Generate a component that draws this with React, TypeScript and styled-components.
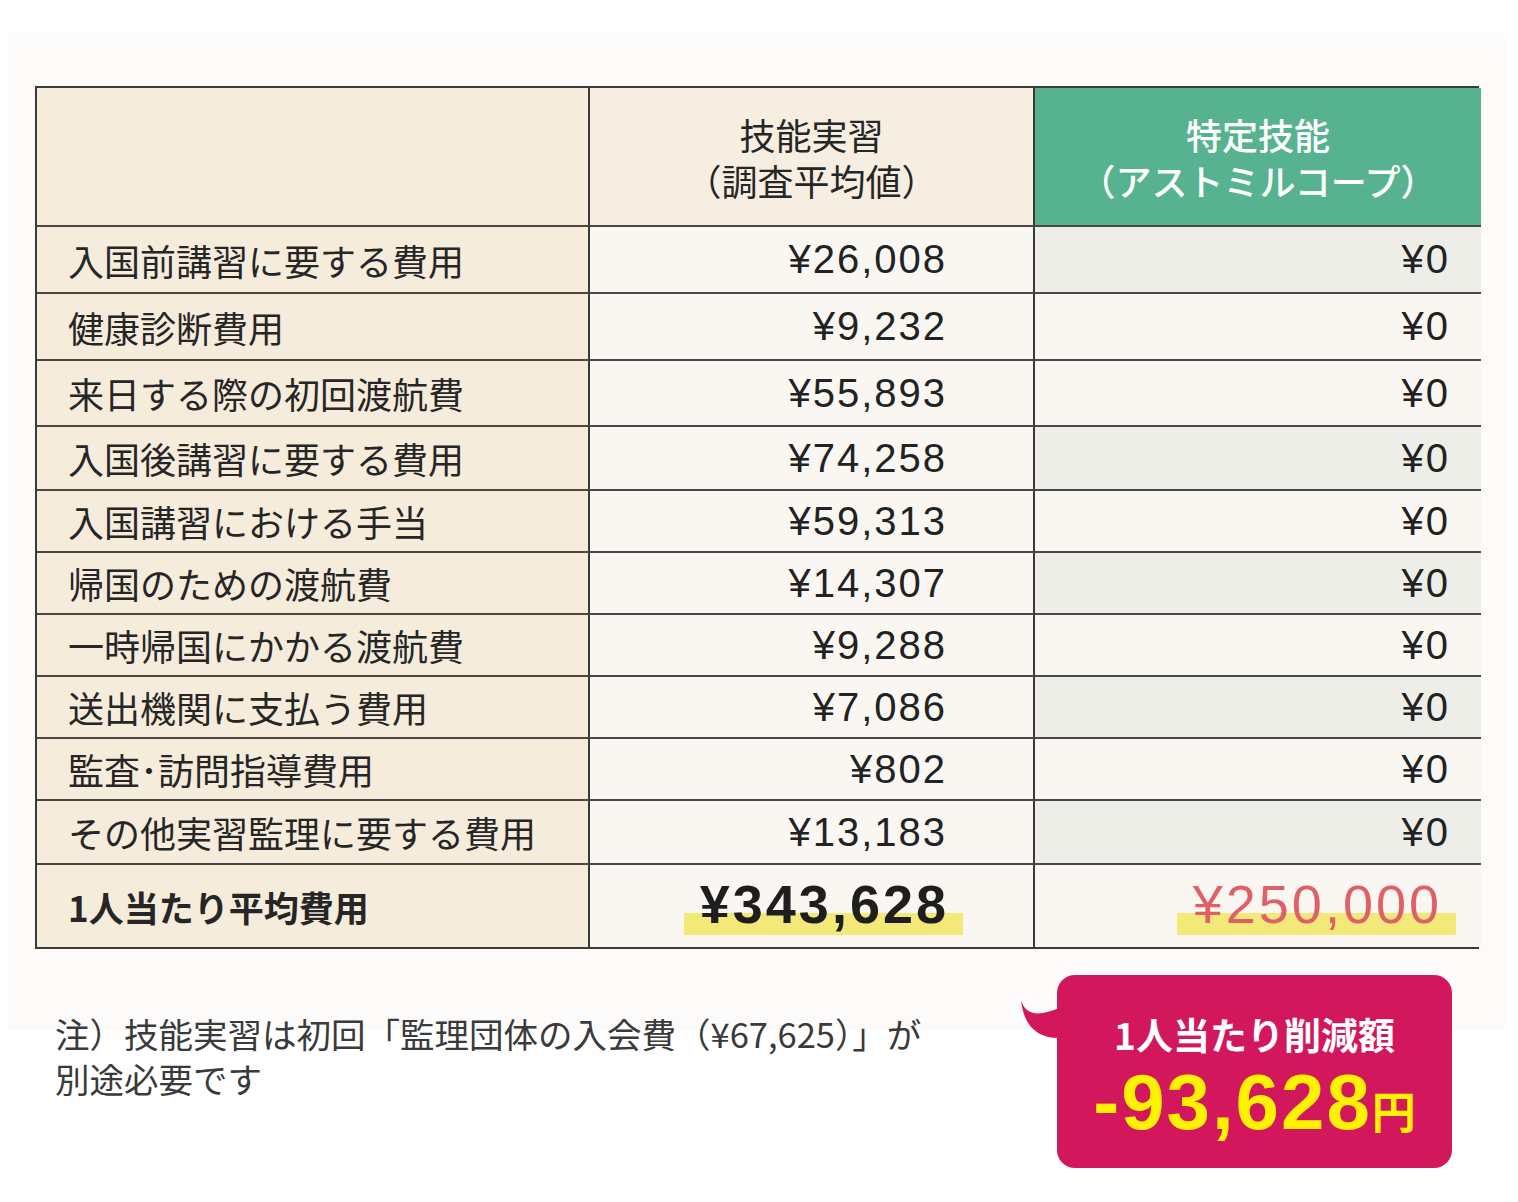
import React from "react";
import styled, { createGlobalStyle } from "styled-components";

// data
const rows = [
  { label: "入国前講習に要する費用", value: "¥26,008", h: 67, grey: true },
  { label: "健康診断費用", value: "¥9,232", h: 67, grey: false },
  { label: "来日する際の初回渡航費", value: "¥55,893", h: 66, grey: false },
  { label: "入国後講習に要する費用", value: "¥74,258", h: 64, grey: true },
  { label: "入国講習における手当", value: "¥59,313", h: 62, grey: false },
  { label: "帰国のための渡航費", value: "¥14,307", h: 62, grey: true },
  { label: "一時帰国にかかる渡航費", value: "¥9,288", h: 62, grey: false },
  { label: "送出機関に支払う費用", value: "¥7,086", h: 62, grey: true },
  { label: "監査･訪問指導費用", value: "¥802", h: 62, grey: false },
  { label: "その他実習監理に要する費用", value: "¥13,183", h: 64, grey: true },
];

// style
const GlobalStyle = createGlobalStyle`
  body {
    margin: 0;
    background: #ffffff;
    font-family: "Noto Sans CJK JP", "Noto Sans", sans-serif;
    color: #222;
  }
`;

const Page = styled.div`
  width: 1518px;
  min-height: 1202px;
  padding: 33px 0 0 8px;
  box-sizing: border-box;
`;

// light panel behind the table, ends around y=1030
const Panel = styled.div`
  width: 1497px;
  box-sizing: border-box;
  padding: 53px 26px 0 27px;
  background: linear-gradient(#fcfbfa, #fcfbfa) no-repeat top left / 100% 997px;
`;

const Table = styled.div`
  width: 1444px;
  display: grid;
  grid-template-columns: 553px 445px 446px;
  border: 2px solid #3c3a38;
  box-sizing: border-box;
`;

const Cell = styled.div<{ $bg: string; $h: number; $last?: boolean; $bottom?: boolean }>`
  height: ${(p) => p.$h}px;
  box-sizing: border-box;
  background: ${(p) => p.$bg};
  border-right: ${(p) => (p.$last ? "none" : "2px solid #3c3a38")};
  border-bottom: ${(p) => (p.$bottom ? "none" : "2px solid #4a4744")};
  display: flex;
  align-items: center;
`;

const HeadText = styled.div<{ $white?: boolean }>`
  width: 100%;
  text-align: center;
  font-size: 36px;
  line-height: 46px;
  font-weight: ${(p) => (p.$white ? 500 : 400)};
  color: ${(p) => (p.$white ? "#ffffff" : "#262626")};
`;

const Label = styled.div<{ $bold?: boolean }>`
  padding-left: 31px;
  font-size: ${(p) => (p.$bold ? 35 : 36)}px;
  font-weight: ${(p) => (p.$bold ? 700 : 400)};
  color: #262626;
  white-space: nowrap;
`;

const Amount = styled.div<{ $pad: number }>`
  width: 100%;
  text-align: right;
  padding-right: ${(p) => p.$pad}px;
  box-sizing: border-box;
  font-family: "Liberation Sans", Arial, sans-serif;
  font-size: 40px;
  letter-spacing: 2px;
  color: #222;
`;

const TotalWrap = styled.div<{ $pad: number }>`
  width: 100%;
  text-align: right;
  padding-right: ${(p) => p.$pad}px;
  box-sizing: border-box;
`;

const Total = styled.span<{ $red?: boolean }>`
  display: inline-block;
  padding: 0 14px 4px 16px;
  font-family: "Liberation Sans", Arial, sans-serif;
  font-size: 54px;
  line-height: 54px;
  letter-spacing: 3px;
  font-weight: ${(p) => (p.$red ? 400 : 700)};
  color: ${(p) => (p.$red ? "#e0606a" : "#1e1e1e")};
  background: linear-gradient(
    to bottom,
    transparent 62%,
    #f3e978 62%,
    #f3e978 100%
  );
`;

const Bottom = styled.div`
  margin-top: 26px;
  display: flex;
  justify-content: space-between;
  align-items: flex-start;
`;

const Note = styled.p`
  margin: 36px 0 0 20px;
  font-size: 34.5px;
  line-height: 45px;
  color: #3a3a3a;
  white-space: nowrap;
`;

const Badge = styled.div`
  position: relative;
  width: 395px;
  height: 193px;
  margin-right: 27px;
  box-sizing: border-box;
  padding-top: 36px;
  border-radius: 18px;
  background: #d3175c;
  text-align: center;
`;

const Tail = styled.svg`
  position: absolute;
  left: -38px;
  top: 25px;
`;

const BadgeTitle = styled.div`
  font-size: 37px;
  line-height: 46px;
  font-weight: 700;
  color: #ffffff;
`;

const BadgeNumber = styled.div`
  margin-top: 6px;
  font-family: "Liberation Sans", Arial, sans-serif;
  font-size: 78px;
  line-height: 78px;
  font-weight: 700;
  letter-spacing: 2px;
  color: #fff200;

  span {
    font-family: "Noto Sans CJK JP", sans-serif;
    font-size: 44px;
    letter-spacing: 0;
  }
`;

const App = () => {
  return (
    <Page>
      <GlobalStyle />
      <Panel>
        <Table>
          <Cell $bg="#f5ecdc" $h={139} />
          <Cell $bg="#f6eee0" $h={139}>
            <HeadText>
              技能実習
              <br />
              （調査平均値）
            </HeadText>
          </Cell>
          <Cell $bg="#57b38f" $h={139} $last>
            <HeadText $white>
              特定技能
              <br />
              （アストミルコープ）
            </HeadText>
          </Cell>

          {rows.map((r) => (
            <React.Fragment key={r.label}>
              <Cell $bg="#f5ecdc" $h={r.h}>
                <Label>{r.label}</Label>
              </Cell>
              <Cell $bg="#faf7f2" $h={r.h}>
                <Amount $pad={86}>{r.value}</Amount>
              </Cell>
              <Cell $bg={r.grey ? "#eeeee8" : "#faf7f2"} $h={r.h} $last>
                <Amount $pad={31}>¥0</Amount>
              </Cell>
            </React.Fragment>
          ))}

          <Cell $bg="#f5ecdc" $h={82} $bottom>
            <Label $bold>1人当たり平均費用</Label>
          </Cell>
          <Cell $bg="#faf7f2" $h={82} $bottom>
            <TotalWrap $pad={70}>
              <Total>¥343,628</Total>
            </TotalWrap>
          </Cell>
          <Cell $bg="#faf7f2" $h={82} $bottom $last>
            <TotalWrap $pad={25}>
              <Total $red>¥250,000</Total>
            </TotalWrap>
          </Cell>
        </Table>

        <Bottom>
          <Note>
            注）技能実習は初回「監理団体の入会費（¥67,625）」が
            <br />
            別途必要です
          </Note>
          <Badge>
            <Tail width="40" height="42" viewBox="0 0 40 42">
              <path d="M2 0 Q 8 22 40 8 L 40 38 Q 6 38 2 0 Z" fill="#d3175c" />
            </Tail>
            <BadgeTitle>1人当たり削減額</BadgeTitle>
            <BadgeNumber>
              -93,628<span>円</span>
            </BadgeNumber>
          </Badge>
        </Bottom>
      </Panel>
    </Page>
  );
};

export default App;
